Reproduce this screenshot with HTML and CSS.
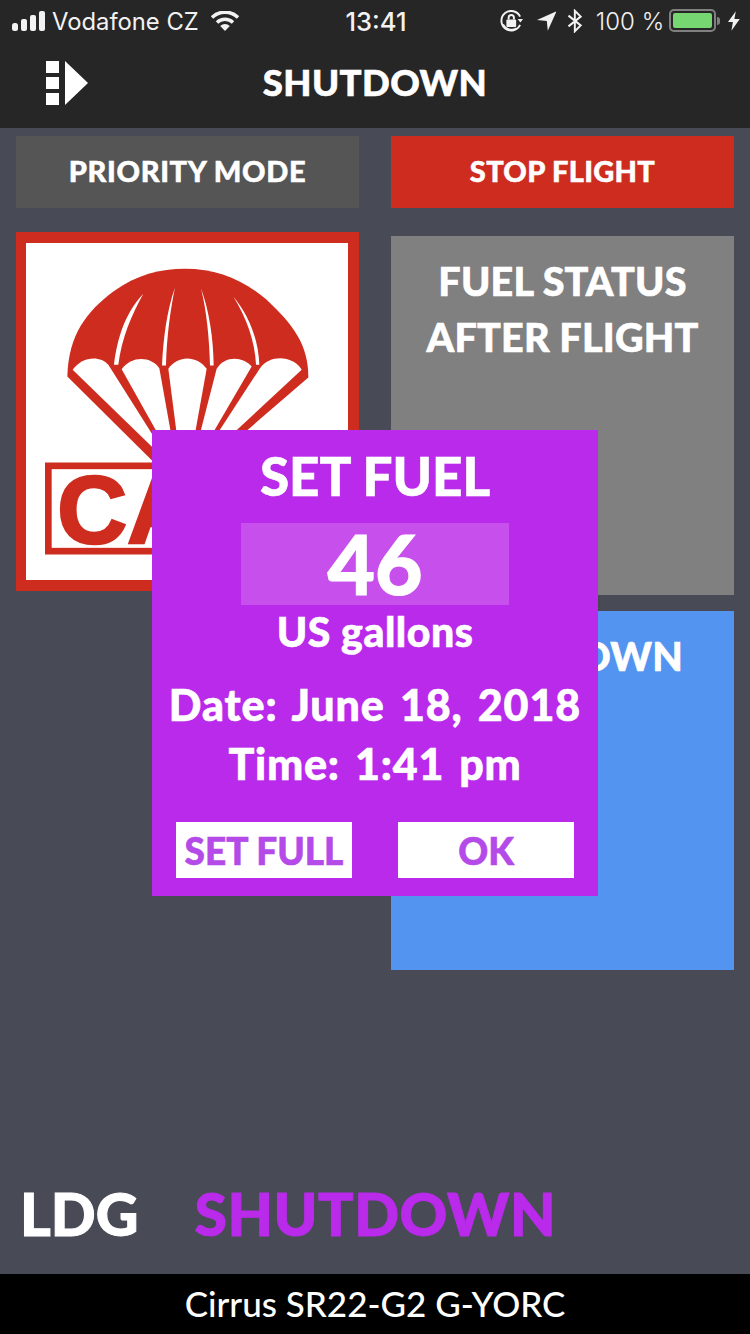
FILE: index.html
```html
<!DOCTYPE html>
<html lang="en">

<head>
    <meta charset="UTF-8" />
    <title>Shutdown</title>
    <link rel="stylesheet" href="styles.css">
</head>

<body>
    <div class="screen">
        <header class="header">
            <div class="status-bar">
                <div class="status-left">
                    <svg class="icon-signal" width="36" height="20" viewBox="0 0 36 20">
                        <rect x="0" y="12" width="6" height="8" rx="2.5" />
                        <rect x="9" y="8" width="6" height="12" rx="2" />
                        <rect x="18" y="4" width="6" height="16" rx="2" />
                        <rect x="27" y="0" width="6" height="20" rx="2" />
                    </svg>
                    <span>Vodafone CZ</span>
                    <svg class="icon-wifi" width="28" height="20" viewBox="0 0 28 20">
                        <path d="M1 6.5 A18.5 18.5 0 0 1 27 6.5" />
                        <path d="M6 11.5 A11.5 11.5 0 0 1 22 11.5" />
                        <path class="wifi-dot" d="M14 20 L9.2 15 A7 7 0 0 1 18.8 15 Z" />
                    </svg>
                </div>
                <span class="status-time">13:41</span>
                <div class="status-right">
                    <svg width="24" height="22" viewBox="0 0 24 22">
                        <path class="thin" d="M20.5 6.5 A10 10 0 1 0 20.5 15" />
                        <path class="thin" d="M3 14.5 A10 10 0 0 0 17 18.5" />
                        <path class="solid" d="M18 9 L23.500 9 L20.800 12.500 Z" />
                        <rect class="solid" x="6.500" y="9.500" width="10" height="7.500" rx="1" />
                        <path class="thin" d="M8.800 9.500 V7.500 A2.700 2.700 0 0 1 14.200 7.500 V9.500" />
                    </svg>
                    <svg class="gap-location" width="20" height="20" viewBox="0 0 20 20">
                        <path class="solid" d="M0 9 L20 0 L11 20 L10 10 Z" />
                    </svg>
                    <svg class="gap-bt" width="16" height="24" viewBox="0 0 16 24">
                        <path class="thin" d="M1.500 6.500 L14 16.500 L8 22.500 V1.500 L14 7.500 L1.500 17.500" />
                    </svg>
                    <span class="battery-text">100 %</span>
                    <div class="battery">
                        <div class="battery-fill"></div>
                    </div>
                    <span class="battery-nub"></span>
                    <svg class="gap-bolt" width="12" height="20" viewBox="0 0 12 20">
                        <path class="solid" d="M8 0 L0 11 L5 11 L3.500 20 L12 8 L6.500 8 Z" />
                    </svg>
                </div>
            </div>
            <div class="nav-bar">
                <svg class="nav-logo" width="42" height="45" viewBox="0 0 42 45">
                    <rect x="0" y="0" width="13" height="12" />
                    <rect x="0" y="16" width="13" height="12" />
                    <rect x="0" y="32" width="13" height="12" />
                    <path d="M19 0 L42 22 L19 44 Z" />
                </svg>
                <h1 class="nav-title">SHUTDOWN</h1>
            </div>
        </header>

        <main class="main-content">
            <div class="button-row">
                <button class="btn btn-grey">PRIORITY MODE</button>
                <button class="btn btn-red">STOP FLIGHT</button>
            </div>

            <div class="tiles">
                <div class="caps-tile">
                    <svg class="caps-art" viewBox="78 55 966 1010">
                        <path class="caps-red" d="M202 455 C205 330 260 260 340 200 C410 150 480 132 555 132 C650 132 730 165 800 225 C880 300 925 360 925 458 L540 790 Z" />
                        <path class="caps-white" d="M218 435 C245 395 300 390 325 420 L480 665 L455 665 Z" />
                        <path class="caps-white" d="M365 433 C395 390 455 395 478 430 L520 665 L495 665 Z" />
                        <path class="caps-white" d="M505 432 C535 390 590 392 620 432 L578 665 L535 665 Z" />
                        <path class="caps-white" d="M650 432 C675 390 730 395 755 425 L615 665 L590 665 Z" />
                        <path class="caps-white" d="M780 430 C810 388 880 392 905 435 L695 630 L650 630 Z" />
                        <path class="caps-white" d="M342 420 C352 340 375 265 430 207 C395 270 365 340 355 420 Z" />
                        <path class="caps-white" d="M486 422 C490 340 500 260 525 188 C510 260 500 340 498 422 Z" />
                        <path class="caps-white" d="M630 422 C628 340 620 260 603 190 C628 260 640 340 641 422 Z" />
                        <path class="caps-white" d="M768 420 C765 350 740 280 700 215 C745 270 775 340 778 420 Z" />
                        <rect class="caps-frame" x="145" y="723" width="860" height="256" />
                        <text class="caps-text" x="172" y="955">CA</text>
                    </svg>
                </div>

                <div class="tile-column">
                    <div class="tile tile-grey">FUEL STATUS<br>AFTER FLIGHT</div>
                    <div class="tile tile-blue">SHUTDOWN</div>
                </div>
            </div>
        </main>

        <div class="phase-row">
            <span class="phase">LDG</span>
            <span class="phase phase-active">SHUTDOWN</span>
        </div>

        <footer class="footer">Cirrus SR22-G2 G-YORC</footer>

        <div class="fuel-modal">
            <h2 class="modal-title">SET FUEL</h2>
            <div class="fuel-value">46</div>
            <p class="fuel-unit">US gallons</p>
            <p class="modal-line modal-date">Date: June 18, 2018</p>
            <p class="modal-line modal-time">Time: 1:41 pm</p>
            <div class="modal-buttons">
                <button class="modal-btn">SET FULL</button>
                <button class="modal-btn">OK</button>
            </div>
        </div>
    </div>
</body>

</html>
```

FILE: styles.css
```css
:root {
    --bg: #484a55;
    --bar: #262626;
    --red: #ce2c1e;
    --purple: #b92aea;
    --purple-light: #c74fec;
    --purple-text: #b44ae8;
    --blue: #5394f0;
    --grey: #808080;
}

* {
    margin: 0;
    padding: 0;
    box-sizing: border-box;
}

body {
    font-family: 'Lato', sans-serif;
    background-color: var(--bg);
    color: white;
}

.screen {
    position: relative;
    width: 750px;
    height: 1334px;
    display: flex;
    flex-direction: column;
    overflow: hidden;
}

.header {
    height: 128px;
    background-color: var(--bar);
    flex-shrink: 0;
}

.status-bar {
    height: 42px;
    padding: 0 10px 0 12px;
    display: flex;
    align-items: center;
    justify-content: space-between;
    font-family: 'Inter', sans-serif;
    font-size: 24px;
    color: #f2f2f2;
}

.status-left,
.status-right {
    display: flex;
    align-items: center;
}

.status-left {
    width: 240px;
    font-size: 23.8px;
}

.status-right {
    width: 240px;
    justify-content: flex-end;
}

.status-left svg,
.status-right svg {
    fill: #f2f2f2;
}

.icon-signal {
    margin-right: 4px;
}

.icon-wifi {
    margin-left: 12px;
}

.icon-wifi path {
    fill: none;
    stroke: #f2f2f2;
    stroke-width: 3.5;
}

.icon-wifi .wifi-dot {
    fill: #f2f2f2;
    stroke: none;
}

.status-time {
    font-size: 25.500px;
    font-weight: 500;
}

.status-right .thin {
    fill: none;
    stroke: #f2f2f2;
    stroke-width: 2;
}

.status-right .solid {
    fill: #f2f2f2;
}

.gap-location {
    margin-left: 13px;
}

.gap-bt {
    margin-left: 11px;
}

.battery-text {
    margin-left: 13px;
    font-weight: 300;
    white-space: nowrap;
}

.battery {
    margin-left: 5px;
    width: 48px;
    height: 23px;
    margin-top: -1px;
    padding: 2px;
    border: 2px solid #808080;
    border-radius: 5px;
}

.battery-fill {
    height: 100%;
    background-color: #76d672;
    border-radius: 2px;
}

.battery-nub {
    width: 3px;
    height: 8px;
    margin-left: 1px;
    background-color: #808080;
    border-radius: 0 3px 3px 0;
}

.gap-bolt {
    margin-left: 8px;
}

.nav-bar {
    position: relative;
    height: 80px;
    display: flex;
    align-items: center;
    justify-content: center;
}

.nav-logo {
    position: absolute;
    left: 46px;
    top: 19px;
    fill: white;
}

.nav-title {
    font-size: 36.500px;
    font-weight: 900;
    letter-spacing: 0.4px;
    -webkit-text-stroke: 0.6px white;
}

.main-content {
    flex: 1;
    padding: 8px 16px 0;
}

.button-row,
.tiles {
    display: grid;
    grid-template-columns: 343px 343px;
    gap: 32px;
}

.button-row {
    margin-bottom: 24px;
}

.btn {
    height: 72px;
    padding-bottom: 4px;
    border: none;
    color: white;
    font-family: inherit;
    font-size: 29px;
    font-weight: 900;
    -webkit-text-stroke: 0.5px white;
}

.btn-grey {
    background-color: #555555;
    letter-spacing: 0.65px;
}

.btn-red {
    background-color: var(--red);
    letter-spacing: 0.3px;
}

.caps-tile {
    height: 359px;
    background-color: white;
    border: 10px solid var(--red);
    border-top-width: 11px;
    border-bottom-width: 11px;
    border-right-width: 11px;
}

.caps-art {
    display: block;
    width: 100%;
    height: 100%;
}

.caps-red {
    fill: var(--red);
}

.caps-white {
    fill: white;
}

.caps-frame {
    fill: none;
    stroke: var(--red);
    stroke-width: 20;
}

.caps-text {
    font-family: 'Liberation Sans', sans-serif;
    font-size: 290px;
    font-weight: 700;
    fill: var(--red);
    stroke: var(--red);
    stroke-width: 8;
}

.tile-column {
    padding-top: 4px;
    display: flex;
    flex-direction: column;
    gap: 16px;
}

.tile {
    height: 359px;
    padding-top: 17px;
    text-align: center;
    font-size: 39.500px;
    font-weight: 900;
    line-height: 56px;
    letter-spacing: 0.2px;
    -webkit-text-stroke: 0.6px white;
}

.tile-grey {
    background-color: var(--grey);
}

.tile-blue {
    background-color: var(--blue);
}

.phase-row {
    height: 146px;
    padding: 24px 0 0 20px;
    display: flex;
    align-items: center;
    gap: 56px;
    flex-shrink: 0;
}

.phase {
    font-size: 59px;
    font-weight: 900;
    -webkit-text-stroke: 1px white;
}

.phase-active {
    color: var(--purple);
    letter-spacing: 0.5px;
    -webkit-text-stroke: 1px var(--purple);
}

.footer {
    height: 60px;
    padding-bottom: 2px;
    background-color: black;
    display: flex;
    align-items: center;
    justify-content: center;
    font-size: 35px;
    font-weight: 500;
    flex-shrink: 0;
}

.fuel-modal {
    position: absolute;
    left: 152px;
    top: 430px;
    width: 446px;
    height: 466px;
    padding-top: 13px;
    background-color: var(--purple);
    display: flex;
    flex-direction: column;
    align-items: center;
    text-align: center;
    font-weight: 900;
    -webkit-text-stroke: 0.6px white;
}

.modal-title {
    font-size: 53px;
    font-weight: 900;
    line-height: 66px;
}

.fuel-value {
    width: 268px;
    height: 82px;
    margin-top: 14px;
    background-color: var(--purple-light);
    font-size: 82px;
    font-weight: 900;
    line-height: 80px;
    -webkit-text-stroke: 1px white;
}

.fuel-unit {
    margin-top: 4px;
    font-size: 41px;
    line-height: 46px;
    letter-spacing: 0.5px;
}

.modal-line {
    font-size: 43px;
    line-height: 60px;
    word-spacing: 4px;
}

.modal-date {
    margin-top: 20px;
    letter-spacing: 0.9px;
}

.modal-time {
    margin-top: -1px;
    letter-spacing: 0.8px;
}

.modal-buttons {
    margin-top: 28px;
    display: flex;
    gap: 46px;
}

.modal-btn {
    width: 176px;
    height: 56px;
    border: none;
    background-color: white;
    color: var(--purple-text);
    font-family: inherit;
    font-size: 37px;
    font-weight: 900;
    -webkit-text-stroke: 0.6px var(--purple-text);
}
```
